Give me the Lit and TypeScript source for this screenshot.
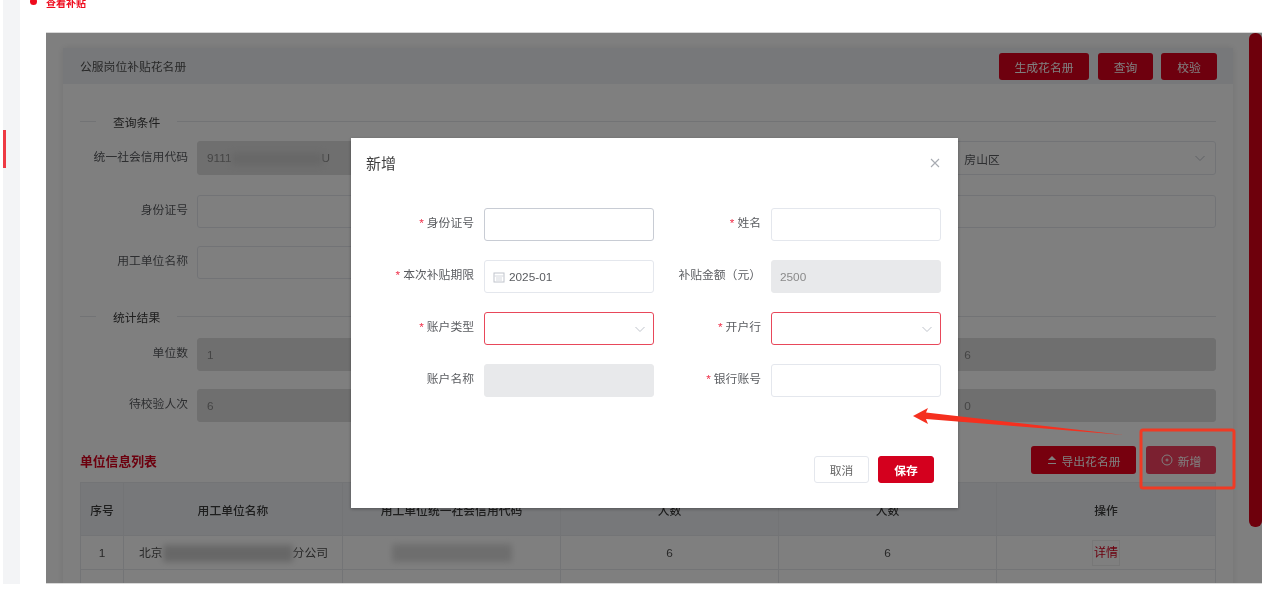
import { LitElement, html, css, svg } from "lit";
import { customElement } from "lit/decorators.js";

const chevron = html`<svg class="chev" viewBox="0 0 12 12" width="12" height="12"><polyline points="1.5,4 6,8.5 10.5,4" fill="none" stroke="#c0c4cc" stroke-width="1"/></svg>`;

@customElement("app-root")
export class AppRoot extends LitElement {
  static styles = css`
    :host { display: block; width: 1280px; height: 599px; overflow: hidden; background: #fff;
      font-family: "Liberation Sans", "Noto Sans CJK SC", sans-serif; font-size: 11.8px; color: #5a5c60; }
    * { box-sizing: border-box; }
    .page { position: relative; display: flex; height: 599px; padding-left: 3px; filter: blur(0.6px); align-items: flex-start; }
    .rail { position: relative; width: 17px; height: 584px; background: #f3f4f6; flex: none; }
    .rail i { position: absolute; left: 0; top: 130px; width: 3px; height: 38px; background: #ee3a44; }
    .main { flex: 1; padding-left: 10px; min-width: 0; }
    .crumb { display: flex; align-items: flex-end; height: 8px; overflow: hidden; gap: 9px; margin-bottom: 24px; color: #ee0a1c; font-size: 10px; line-height: 12px; font-weight: 700; }
    .crumb b { width: 7px; height: 7px; border-radius: 50%; background: #ee0a1c; margin-bottom: 3px; flex: none; }
    .crumb span { position: relative; top: 2px; }

    .frame { position: relative; margin-left: 16px; width: 1216px; height: 552px; overflow: hidden; background: #fff; padding: 15px 29px 0 17px; border-top: 1px solid #d8d8d8; border-bottom: 1px solid #d8d8d8; }
    .panel { background: #fff; box-shadow: 0 0 7px rgba(0,0,0,.1); height: 600px; }
    .phead { display: flex; align-items: center; height: 36px; padding: 0 16px 0 17px; background: #eef1f5; color: #505050; }
    .phead .t { flex: 1; position: relative; top: -1px; }
    .btns { display: flex; gap: 8px; }
    .btn { display: inline-flex; align-items: center; justify-content: center; gap: 5px; height: 27px; border-radius: 3px; background: #dc001c; color: #fff; border: 0; font: inherit; }
    .w90 { width: 90px; margin-right: 1px; } .w55 { width: 55px; } .w56 { width: 56px; }
    .pbody { padding: 29px 17px 0 17px; }
    .legend { display: flex; align-items: center; height: 16px; color: #3c3c3c; }
    .legend::before { content: ""; width: 16px; height: 1px; background: #e4e6ea; margin-right: 17px; }
    .legend::after { content: ""; flex: 1; height: 1px; background: #e4e6ea; margin-left: 17px; }
    .grid { display: grid; grid-template-columns: repeat(3, 1fr); row-gap: 18px; }
    .q { margin-top: 12px; grid-template-rows: 36px 33px 33px; }
    .s { margin-top: 14px; grid-template-rows: 33px 33px; }
    .stat-l { margin-top: 29px; }
    .f { display: flex; align-items: flex-start; }
    .f label { width: 108px; margin-right: 9px; text-align: right; line-height: 30px; flex: none; }
    .f.first label { line-height: 32px; }
    .inp { flex: 1; height: 33px; border: 1px solid #e4e7ed; border-radius: 3px; background: #fff; display: flex; align-items: center; padding: 0 9px; justify-content: space-between; }
    .inp.tall { height: 34px; }
    .inp.dis { background: #dedede; border-color: #dedede; color: #8a8a8a; }
    .smear { display: inline-block; vertical-align: middle; background: #cfcfcf; filter: blur(3px); }
    .sm1 { width: 90px; height: 12px; }
    .sm2 { width: 130px; height: 17px; }
    .sm3 { width: 120px; height: 18px; background: #dcdcdc; }
    .lhead { display: flex; align-items: center; margin-top: 24px; height: 28px; }
    .lhead h3 { flex: 1; margin: 0; color: #d8001c; font-size: 12.8px; font-weight: 700; }
    .lhead .btn { height: 28px; }
    .w105 { width: 105px; margin-right: 10px; background: #ee001c; } .w70 { width: 70px; background: #f64060; }
    table { margin-top: 8px; width: 1135px; border-collapse: collapse; table-layout: fixed; color: #505050; }
    td, th { border: 1px solid #e6e8ec; text-align: center; padding: 0; }
    th { height: 53px; background: #eef1f5; color: #3c3c3c; font-weight: 500; }
    td { height: 34px; }
    .c1 { width: 43px; } .c2 { width: 219px; } .c3 { width: 218px; }
    .lt { text-align: left; padding-left: 15px; white-space: nowrap; }
    .link { display: inline-block; color: #d8001c; border: 1px solid #eee; padding: 5px 1px; line-height: 14px; font-size: 12px; }

    .overlay { position: absolute; inset: 0; background: rgba(0,0,0,.5); }
    .bar { position: absolute; right: 0; top: 0; width: 13px; height: 494px; border-radius: 6px; background: #dc0018; }

    .modal { position: absolute; left: 305px; top: 105px; width: 607px; height: 370px; background: #fff; box-shadow: 0 1px 3px rgba(0,0,0,.3); display: flex; flex-direction: column; }
    .mhead { display: flex; align-items: center; justify-content: space-between; height: 48px; margin-bottom: 4px; padding: 0 18px 0 15px; font-size: 15px; color: #3f3f3f; }
    .mhead svg { position: relative; top: 1px; }
    .mgrid { display: grid; grid-template-columns: repeat(2, 287px); margin: 18px 0 0 16px; row-gap: 19px; }
    .mf { display: flex; gap: 10px; align-items: flex-start; }
    .mf label { flex: 1; text-align: right; line-height: 31px; white-space: nowrap; }
    .mf em { color: #f0304a; font-style: normal; margin-right: 3px; }
    .mi { width: 170px; height: 33px; border: 1px solid #e4e7ed; border-radius: 3px; display: flex; align-items: center; justify-content: space-between; padding: 0 7px 0 8px; gap: 4px; }
    .mi.focus { border-color: #c8ccd4; }
    .mi.err { border-color: #e8475a; }
    .mi.dis { background: #e8e9eb; border-color: #e8e9eb; color: #8a8a8a; }
    .mi.start { justify-content: flex-start; }
    .mfoot { margin-top: auto; display: flex; justify-content: flex-end; gap: 9px; padding: 0 24px 25px 0; }
    .b2 { width: 55px; height: 27px; border-radius: 3px; border: 1px solid #e4e7ed; background: #fff; color: #666; font: inherit; }
    .b2.pri { width: 56px; background: #d4001e; border-color: #d4001e; color: #fff; font-weight: 700; }

    .note { position: absolute; left: 0; top: 0; }
  `;

  private field(label: string, body: unknown, first = false) {
    return html`<div class="f ${first ? "first" : ""}"><label>${label}</label>${body}</div>`;
  }

  private mfield(label: string, req: boolean, cls: string, content: unknown = "") {
    return html`<div class="mf"><label>${req ? html`<em>*</em>` : ""}${label}</label><div class="mi ${cls}">${content}</div></div>`;
  }

  render() {
    return html`
      <div class="page">
        <div class="rail"><i></i></div>
        <div class="main">
          <div class="crumb"><b></b><span>查看补贴</span></div>
          <div class="frame">
            <div class="panel">
              <div class="phead">
                <span class="t">公服岗位补贴花名册</span>
                <div class="btns">
                  <button class="btn w90">生成花名册</button>
                  <button class="btn w55">查询</button>
                  <button class="btn w56">校验</button>
                </div>
              </div>
              <div class="pbody">
                <div class="legend">查询条件</div>
                <div class="grid q">
                  ${this.field("统一社会信用代码", html`<div class="inp tall dis"><span>9111<span class="smear sm1"></span>U</span></div>`, true)}
                  ${this.field("所属地区", html`<div class="inp tall"></div>`, true)}
                  ${this.field("所属区", html`<div class="inp tall"><span>房山区</span>${chevron}</div>`, true)}
                  ${this.field("身份证号", html`<div class="inp"></div>`)}
                  ${this.field("姓名", html`<div class="inp"></div>`)}
                  ${this.field("补贴期限", html`<div class="inp"></div>`)}
                  ${this.field("用工单位名称", html`<div class="inp"></div>`)}
                </div>
                <div class="legend stat-l">统计结果</div>
                <div class="grid s">
                  ${this.field("单位数", html`<div class="inp dis">1</div>`)}
                  ${this.field("人次", html`<div class="inp dis">6</div>`)}
                  ${this.field("人数", html`<div class="inp dis">6</div>`)}
                  ${this.field("待校验人次", html`<div class="inp dis">6</div>`)}
                  ${this.field("已校验人次", html`<div class="inp dis">6</div>`)}
                  ${this.field("未通过人次", html`<div class="inp dis">0</div>`)}
                </div>
                <div class="lhead">
                  <h3>单位信息列表</h3>
                  <button class="btn w105">
                    <svg width="10" height="10" viewBox="0 0 10 10"><path d="M5 1 L9 5 H1 Z M1 8 H9 V9 H1 Z" fill="#fff"/></svg>
                    导出花名册</button>
                  <button class="btn w70">
                    <svg width="12" height="12" viewBox="0 0 12 12"><circle cx="6" cy="6" r="5" fill="none" stroke="#fff"/><path d="M4.5 6 H7.5 M6 4.5 V7.5" stroke="#fff"/></svg>
                    新增</button>
                </div>
                <table>
                  <thead><tr>
                    <th class="c1">序号</th><th class="c2">用工单位名称</th><th class="c3">用工单位统一社会信用代码</th><th class="c3">人数</th><th class="c3">人数</th><th class="c2">操作</th>
                  </tr></thead>
                  <tbody>
                    <tr>
                      <td>1</td>
                      <td class="lt">北京<span class="smear sm2"></span>分公司</td>
                      <td><span class="smear sm3"></span></td>
                      <td>6</td><td>6</td>
                      <td><span class="link">详情</span></td>
                    </tr>
                    <tr><td></td><td></td><td></td><td></td><td></td><td></td></tr>
                  </tbody>
                </table>
              </div>
            </div>
            <div class="bar"></div>
            <div class="overlay"></div>
            <div class="modal">
              <div class="mhead"><span>新增</span>
                <svg width="10" height="10" viewBox="0 0 10 10"><path d="M1 1 L9 9 M9 1 L1 9" stroke="#a8abb2" stroke-width="1.1"/></svg>
              </div>
              <div class="mgrid">
                ${this.mfield("身份证号", true, "focus")}
                ${this.mfield("姓名", true, "")}
                ${this.mfield("本次补贴期限", true, "start", html`<svg width="12" height="12" viewBox="0 0 12 12"><rect x="1" y="2" width="10" height="9" fill="none" stroke="#c0c4cc"/><path d="M1 5 H11 M3 7 H9 M3 9 H9" stroke="#d5d8de"/></svg><span>2025-01</span>`)}
                ${this.mfield("补贴金额（元）", false, "dis", html`<span>2500</span>`)}
                ${this.mfield("账户类型", true, "err", html`<span></span>${chevron}`)}
                ${this.mfield("开户行", true, "err", html`<span></span>${chevron}`)}
                ${this.mfield("账户名称", false, "dis")}
                ${this.mfield("银行账号", true, "")}
              </div>
              <div class="mfoot">
                <button class="b2">取消</button>
                <button class="b2 pri">保存</button>
              </div>
            </div>
          </div>
        </div>
        <svg class="note" width="1280" height="599" viewBox="0 0 1280 599">
          ${svg`<path d="M913 416 L928 408 L926 412.5 L1124 435 L926 419 L928 424 Z" fill="#f5301f"/>
          <rect x="1141" y="430" width="93" height="58" rx="2" fill="none" stroke="#f03a24" stroke-width="3"/>`}
        </svg>
      </div>
    `;
  }
}
